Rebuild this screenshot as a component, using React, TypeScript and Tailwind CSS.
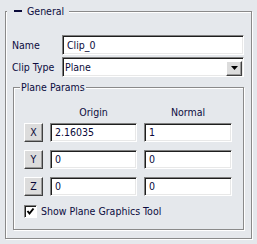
const FONT = "font-['DejaVu_Sans_Condensed','DejaVu_Sans','Liberation_Sans',sans-serif] text-[10.5px] leading-none";

function Field({ w, value }: { w: string; value: string }) {
  return (
    <div
      className={`${w} h-full bg-white border border-t-[#808080] border-l-[#808080] border-b-white border-r-white shadow-[inset_1px_1px_0_#1e1e1e,inset_-1px_-1px_0_#e8e8e8] pl-[4px] flex items-center text-[#0a0a3a]`}
    >
      {value}
    </div>
  );
}

function AxisButton({ label }: { label: string }) {
  return (
    <div className="w-[19px] h-full bg-[#dcdcdc] border border-t-white border-l-white border-b-[#404040] border-r-[#404040] shadow-[inset_-1px_-1px_0_#9a9a9a] flex items-center justify-center text-[#0a0a3a]">
      {label}
    </div>
  );
}

export default function App() {
  return (
    <div className={`w-[257px] h-[244px] bg-[#e5e8ec] pl-[5px] pt-[11px] text-[#0c0c40] ${FONT}`}>
      <div className="relative w-[247px] h-[228px] border border-[#8a8a8a] shadow-[1px_1px_0_#ffffff,inset_1px_1px_0_#ffffff] pl-[6px] pt-[23px]">
        <div className="absolute left-[1px] top-[-8px] h-[14px] flex items-center bg-[#e5e8ec] pl-[7px] pr-[5px] gap-[5px]">
          <span className="block w-[8px] h-[2px] bg-[#0a0a3a]" />
          <span>General</span>
        </div>

        <div className="flex items-center h-[20px]">
          <span className="w-[50px]">Name</span>
          <Field w="w-[182px]" value="Clip_0" />
        </div>

        <div className="flex items-center h-[20px] mt-[2px]">
          <span className="w-[50px]">Clip Type</span>
          <div className="w-[182px] h-full bg-white border border-t-[#808080] border-l-[#808080] border-b-white border-r-white shadow-[inset_1px_1px_0_#1e1e1e,inset_-1px_-1px_0_#e8e8e8] pl-[2px] flex items-center text-[#0a0a3a]">
            <span>Plane</span>
            <div className="ml-auto mr-[1px] mt-[2px] w-[16px] h-[15px] bg-[#dcdcdc] border border-t-white border-l-white border-b-[#404040] border-r-[#404040] shadow-[inset_-1px_-1px_0_#9a9a9a] flex items-center justify-center">
              <svg width="7" height="4" viewBox="0 0 7 4">
                <polygon points="0,0 7,0 3.5,4" fill="#000" />
              </svg>
            </div>
          </div>
        </div>

        <div className="relative mt-[10px] ml-[1px] w-[231px] h-[143px] border border-[#8a8a8a] shadow-[1px_1px_0_#ffffff,inset_1px_1px_0_#ffffff] pl-[10px] pt-[17px]">
          <div className="absolute left-[6px] top-[-8px] h-[15px] flex items-center bg-[#e5e8ec] pl-[1px] pr-[1px]">
            <span>Plane Params</span>
          </div>

          <div className="flex items-center h-[14px] gap-[7px]">
            <span className="w-[19px]" />
            <span className="w-[87px] text-center">Origin</span>
            <span className="w-[88px] text-center">Normal</span>
          </div>

          <div className="flex flex-col gap-[8px] mt-[4px]">
            <div className="flex h-[19px] gap-[7px]">
              <AxisButton label="X" />
              <Field w="w-[87px]" value="2.16035" />
              <Field w="w-[88px]" value="1" />
            </div>
            <div className="flex h-[19px] gap-[7px]">
              <AxisButton label="Y" />
              <Field w="w-[87px]" value="0" />
              <Field w="w-[88px]" value="0" />
            </div>
            <div className="flex h-[19px] gap-[7px]">
              <AxisButton label="Z" />
              <Field w="w-[87px]" value="0" />
              <Field w="w-[88px]" value="0" />
            </div>
          </div>

          <div className="flex items-center mt-[9px] h-[13px] gap-[4px]">
            <div className="w-[13px] h-[13px] bg-white border border-t-[#808080] border-l-[#808080] border-b-white border-r-white shadow-[inset_1px_1px_0_#1e1e1e] flex items-center justify-center">
              <svg width="9" height="9" viewBox="0 0 9 9">
                <polyline points="1.5,4 3.5,6.5 7.5,1.5" fill="none" stroke="#000" strokeWidth="2" />
              </svg>
            </div>
            <span>Show Plane Graphics Tool</span>
          </div>
        </div>
      </div>
    </div>
  );
}
